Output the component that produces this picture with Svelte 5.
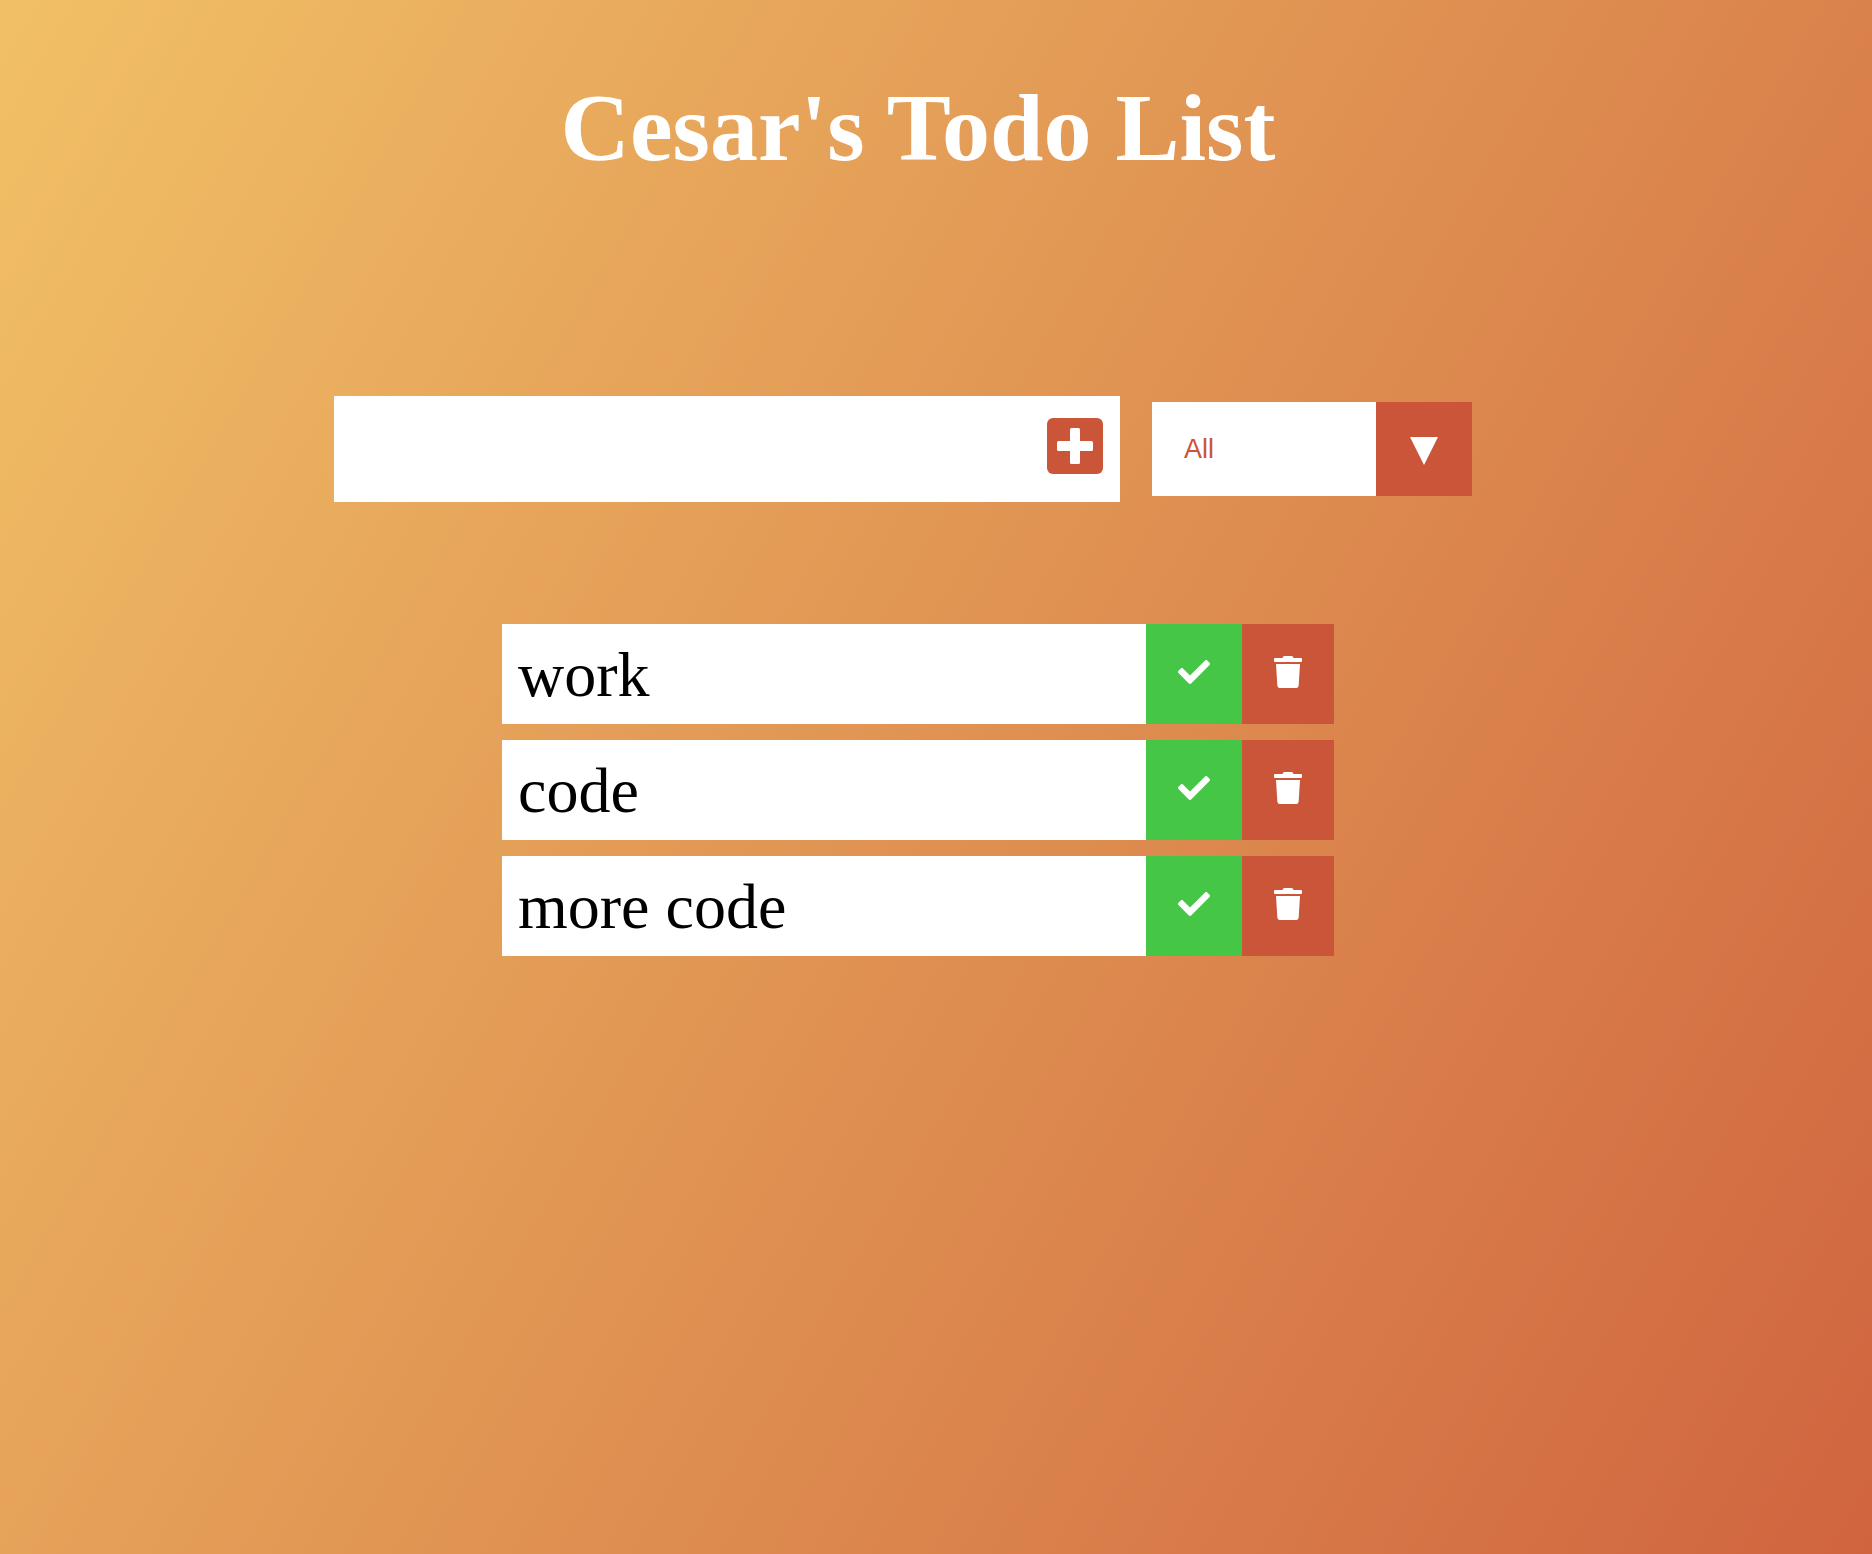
<script>
  let draft = $state('');
  let filter = $state('all');
  let nextId = 4;
  let todos = $state([
    { id: 1, text: 'work', done: false },
    { id: 2, text: 'code', done: false },
    { id: 3, text: 'more code', done: false }
  ]);
  let visible = $derived(
    todos.filter((t) => filter === 'all' || (filter === 'completed') === t.done)
  );

  function add(event) {
    event.preventDefault();
    if (!draft.trim()) return;
    todos.push({ id: nextId++, text: draft.trim(), done: false });
    draft = '';
  }

  function remove(id) {
    todos = todos.filter((t) => t.id !== id);
  }
</script>

<div class="page">
  <header>
    <h1>Cesar's Todo List</h1>
  </header>

  <form onsubmit={add}>
    <div class="entry">
      <input type="text" aria-label="New todo" bind:value={draft} />
      <button class="add" type="submit" aria-label="Add todo">
        <svg viewBox="0 0 56 56" aria-hidden="true">
          <rect width="56" height="56" rx="6" fill="#cb5538" />
          <path fill="#fff" d="M24.500 10h7q1.500 0 1.500 1.500V23h11.500q1.500 0 1.500 1.500v7q0 1.500-1.500 1.500H33v11.500q0 1.500-1.500 1.500h-7q-1.500 0-1.500-1.500V33H11.500q-1.500 0-1.500-1.500v-7q0-1.500 1.500-1.500H23V11.500q0-1.500 1.500-1.500z" />
        </svg>
      </button>
    </div>
    <div class="filter">
      <select aria-label="Filter todos" bind:value={filter}>
        <option value="all">All</option>
        <option value="completed">Completed</option>
        <option value="uncompleted">Uncompleted</option>
      </select>
      <span class="arrow" aria-hidden="true">
        <svg viewBox="0 0 28 28"><path fill="#fff" d="M0 0h28L14 28z" /></svg>
      </span>
    </div>
  </form>

  <ul>
    {#each visible as todo (todo.id)}
      <li class:done={todo.done}>
        <span class="text">{todo.text}</span>
        <button class="complete" type="button" aria-label="Complete {todo.text}" onclick={() => (todo.done = !todo.done)}>
          <svg viewBox="0 0 512 512" aria-hidden="true">
            <path fill="#fff" d="M173.898 439.404l-166.400-166.400c-9.997-9.997-9.997-26.206 0-36.204l36.203-36.204c9.997-9.998 26.207-9.998 36.204 0L192 312.690 432.095 72.596c9.997-9.997 26.207-9.997 36.204 0l36.203 36.204c9.997 9.997 9.997 26.206 0 36.204l-294.400 294.401c-9.998 9.997-26.207 9.997-36.204-.001z" />
          </svg>
        </button>
        <button class="remove" type="button" aria-label="Delete {todo.text}" onclick={() => remove(todo.id)}>
          <svg viewBox="0 0 448 512" aria-hidden="true">
            <path fill="#fff" d="M432 32H312l-9.400-18.700A24 24 0 0 0 281.100 0H166.800a23.720 23.720 0 0 0-21.400 13.300L136 32H16A16 16 0 0 0 0 48v32a16 16 0 0 0 16 16h416a16 16 0 0 0 16-16V48a16 16 0 0 0-16-16zM53.200 467a48 48 0 0 0 47.900 45h245.800a48 48 0 0 0 47.900-45L416 128H32z" />
          </svg>
        </button>
      </li>
    {/each}
  </ul>
</div>

<style>
  :global(body) {
    margin: 0;
  }
  .page {
    box-sizing: border-box;
    min-height: 100vh;
    padding-right: 36px;
    background: linear-gradient(120deg, #f1c066, #e19654 46%, #d0643f);
    font-family: 'Liberation Serif', 'Times New Roman', serif;
  }
  header {
    padding-top: 72px;
    text-align: center;
  }
  h1 {
    margin: 0;
    color: #fff;
    font-size: 96px;
    line-height: 112px;
    font-weight: 700;
  }
  form {
    display: flex;
    flex-wrap: wrap;
    justify-content: center;
    align-items: center;
    gap: 32px;
    margin-top: 212px;
    padding-right: 30px;
  }
  .entry {
    display: flex;
    background: #fff;
  }
  input {
    box-sizing: border-box;
    width: 696px;
    height: 106px;
    padding: 16px;
    border: 0;
    outline: 0;
    background: transparent;
    font: inherit;
    font-size: 64px;
  }
  button {
    border: 0;
    cursor: pointer;
  }
  .add {
    padding: 22px 17px 28px;
    background: transparent;
  }
  .add svg {
    display: block;
    width: 56px;
    height: 56px;
  }
  .filter {
    display: grid;
    grid-template-columns: 224px 96px;
    height: 94px;
  }
  select {
    grid-area: 1 / 1 / 2 / 3;
    appearance: none;
    width: 100%;
    padding: 0 128px 0 32px;
    border: 0;
    border-radius: 0;
    outline: 0;
    background: #fff;
    color: #cb5538;
    font-family: 'Liberation Sans', Arial, sans-serif;
    font-size: 27px;
    cursor: pointer;
  }
  .arrow {
    grid-area: 1 / 2;
    display: grid;
    place-items: center;
    padding-top: 4px;
    background: #cb5538;
    pointer-events: none;
  }
  .arrow svg {
    display: block;
    width: 28px;
    height: 28px;
  }
  ul {
    display: flex;
    flex-direction: column;
    align-items: center;
    gap: 16px;
    margin: 0;
    padding: 122px 0 64px;
    list-style: none;
  }
  li {
    display: flex;
    background: #fff;
  }
  .text {
    box-sizing: border-box;
    width: 644px;
    padding: 17px 16px 15px;
    color: #000;
    font-size: 64px;
    line-height: 68px;
  }
  .done .text {
    text-decoration: line-through;
    opacity: 0.5;
  }
  .complete,
  .remove {
    display: flex;
    justify-content: center;
    padding: 32px;
  }
  .complete {
    width: 96px;
    background: #45c646;
  }
  .remove {
    width: 92px;
    background: #cb5538;
  }
  .complete svg,
  .remove svg {
    height: 32px;
  }
</style>
